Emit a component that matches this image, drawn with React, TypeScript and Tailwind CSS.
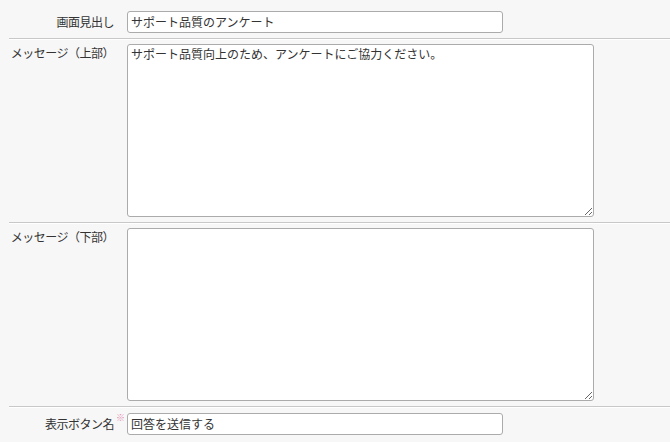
const fieldFont = {
  fontFamily: '"Noto Sans CJK JP", "Noto Sans", sans-serif',
};

const inputClass =
  "h-[22px] w-[376px] rounded-[3px] border border-[#ababab] bg-white px-[3px] text-[12px] text-[#333333] outline-none";
const textareaClass =
  "h-[173px] w-[467px] rounded-[3px] border border-[#ababab] bg-white px-[3px] py-[1px] text-[12px] leading-[16px] text-[#333333] outline-none";

function Label({ text, required }: { text: string; required?: boolean }) {
  return (
    <div className="w-[118px] shrink-0 pr-[13px] text-right">
      <span className="relative whitespace-nowrap tracking-[-0.5px]">
        {text}
        {required ? (
          <span className="absolute -top-[2px] left-full pl-[2px] text-[9px] leading-none text-[#e58cb0]">※</span>
        ) : null}
      </span>
    </div>
  );
}

export default function App() {
  return (
    <div
      className="h-[442px] w-[670px] overflow-hidden bg-[#f7f7f7] text-[12px] leading-[16px] text-[#333333]"
      style={fieldFont}
    >
      <div className="ml-[9px] flex h-[39px] items-center border-b border-[#c8c8c8] pb-[1px] pt-[6px] shadow-[0_1px_0_#ffffff]">
        <Label text="画面見出し" />
        <input defaultValue="サポート品質のアンケート" className={inputClass} style={fieldFont} />
      </div>
      <div className="ml-[9px] flex h-[184px] items-start border-b border-[#c8c8c8] pt-[5px] shadow-[0_1px_0_#ffffff]">
        <div className="pt-[1px]">
          <Label text="メッセージ（上部）" />
        </div>
        <textarea
          defaultValue="サポート品質向上のため、アンケートにご協力ください。"
          className={textareaClass}
          style={fieldFont}
        />
      </div>
      <div className="ml-[9px] flex h-[184px] items-start border-b border-[#c8c8c8] pt-[5px] shadow-[0_1px_0_#ffffff]">
        <div className="pt-[1px]">
          <Label text="メッセージ（下部）" />
        </div>
        <textarea className={textareaClass} style={fieldFont} />
      </div>
      <div className="ml-[9px] flex h-[33px] items-center">
        <Label text="表示ボタン名" required />
        <input defaultValue="回答を送信する" className={inputClass} style={fieldFont} />
      </div>
    </div>
  );
}
